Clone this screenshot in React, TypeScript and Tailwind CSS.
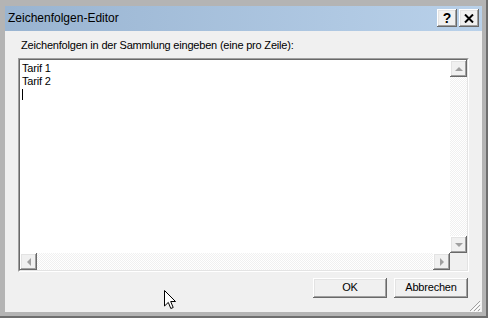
import type { ReactNode } from "react";

const raised =
  "bg-[#f0f0f0] shadow-[inset_-1px_-1px_0_#696969,inset_1px_1px_0_#ffffff,inset_-2px_-2px_0_#a0a0a0,inset_2px_2px_0_#e3e3e3]";

function ScrollButton({ dir }: { dir: "up" | "down" | "left" | "right" }) {
  const pts = {
    up: "5,2 1,6 9,6",
    down: "1,2 9,2 5,6",
    left: "6,1 6,9 2,5",
    right: "2,1 2,9 6,5",
  }[dir];
  const vertical = dir === "up" || dir === "down";
  return (
    <div className={`flex h-[17px] w-[17px] items-center justify-center ${raised}`}>
      <svg
        width={vertical ? 10 : 8}
        height={vertical ? 8 : 10}
        viewBox={vertical ? "0 0 10 8" : "0 0 8 10"}
      >
        <polygon points={pts} fill="#a0a0a0" />
      </svg>
    </div>
  );
}

function TitleButton({ children }: { children: ReactNode }) {
  return (
    <div className={`flex h-[18px] w-[20px] items-center justify-center ${raised}`}>
      {children}
    </div>
  );
}

function DialogButton({ label }: { label: string }) {
  return (
    <button
      type="button"
      className={`flex h-[20px] w-[74px] items-center justify-center pb-[1px] text-[11px] tracking-[-0.2px] text-black ${raised}`}
    >
      {label}
    </button>
  );
}

const track =
  "bg-[repeating-conic-gradient(#f0f0f0_0_25%,#ffffff_0_50%)] bg-[length:2px_2px]";

export default function App() {
  return (
    <div
      className="relative h-[321px] w-[491px] overflow-hidden bg-white"
      style={{ fontFamily: '"Liberation Sans", Arial, sans-serif' }}
    >
      {/* window with drop edge */}
      <div className="h-[318px] w-[488px] border-b-2 border-r-2 border-[#6e6e6e]">
        <div className="flex h-full w-full flex-col bg-[#b4b4b4] pb-[4px] pl-[5px] pr-[4px] pt-[6px]">
          {/* title bar */}
          <div className="flex h-[25px] shrink-0 items-start bg-gradient-to-r from-[#99b4d1] to-[#b9d1ea] pl-[3px] pr-[3px]">
            <span className="mt-[5px] text-[12px] leading-[14px] text-black">
              Zeichenfolgen-Editor
            </span>
            <div className="ml-auto mt-[3px] flex gap-[2px]">
              <TitleButton>
                <span className="text-[14px] font-bold leading-none text-black">?</span>
              </TitleButton>
              <TitleButton>
                <svg width="10" height="9" viewBox="0 0 10 9">
                  <path d="M1 0.5 L9 8.5 M9 0.5 L1 8.5" stroke="#000" strokeWidth="2" />
                </svg>
              </TitleButton>
            </div>
          </div>

          {/* client area */}
          <div className="relative flex flex-1 flex-col bg-[#f0f0f0]">
            <p className="ml-[16px] mt-[8px] text-[11px] leading-[13px] tracking-[-0.2px] text-black">
              Zeichenfolgen in der Sammlung eingeben (eine pro Zeile):
            </p>

            <div className="ml-[13px] mt-[6px] h-[214px] w-[451px] border-b border-l border-r border-t border-b-white border-l-[#a0a0a0] border-r-white border-t-[#a0a0a0]">
              <div className="grid h-full w-full grid-cols-[1fr_17px] grid-rows-[1fr_17px] border-b border-l border-r border-t border-b-[#e3e3e3] border-l-[#696969] border-r-[#e3e3e3] border-t-[#696969] bg-white">
                <div className="pl-[2px] pt-[2px] text-[11px] leading-[13px] tracking-[-0.2px] text-black">
                  <div>Tarif 1</div>
                  <div>Tarif 2</div>
                  <div className="mt-[1px] h-[11px] w-[1px] bg-black" />
                </div>
                <div className={`flex flex-col justify-between ${track}`}>
                  <ScrollButton dir="up" />
                  <ScrollButton dir="down" />
                </div>
                <div className={`flex justify-between ${track}`}>
                  <ScrollButton dir="left" />
                  <ScrollButton dir="right" />
                </div>
                <div className="bg-[#f0f0f0]" />
              </div>
            </div>

            <div className="ml-[308px] mt-[6px] flex gap-[7px]">
              <DialogButton label="OK" />
              <DialogButton label="Abbrechen" />
            </div>

            {/* size grip */}
            <svg
              className="absolute bottom-[0px] right-[1px]"
              width="12"
              height="12"
              viewBox="0 0 12 12"
            >
              <path d="M11 1 L1 11 M11 5 L5 11 M11 9 L9 11" stroke="#a0a0a0" strokeWidth="1" />
              <path d="M12 2 L2 12 M12 6 L6 12 M12 10 L10 12" stroke="#ffffff" strokeWidth="1" />
            </svg>
          </div>
        </div>
      </div>

      {/* mouse pointer */}
      <svg
        className="absolute left-[164px] top-[290px]"
        width="13"
        height="20"
        viewBox="0 0 13 20"
      >
        <path
          d="M0.5 0.5 L0.5 16 L4.3 12.4 L6.8 18.5 L9.2 17.5 L6.7 11.5 L11.5 11.5 Z"
          fill="#fff"
          stroke="#000"
          strokeWidth="1"
          strokeLinejoin="miter"
        />
      </svg>
    </div>
  );
}
